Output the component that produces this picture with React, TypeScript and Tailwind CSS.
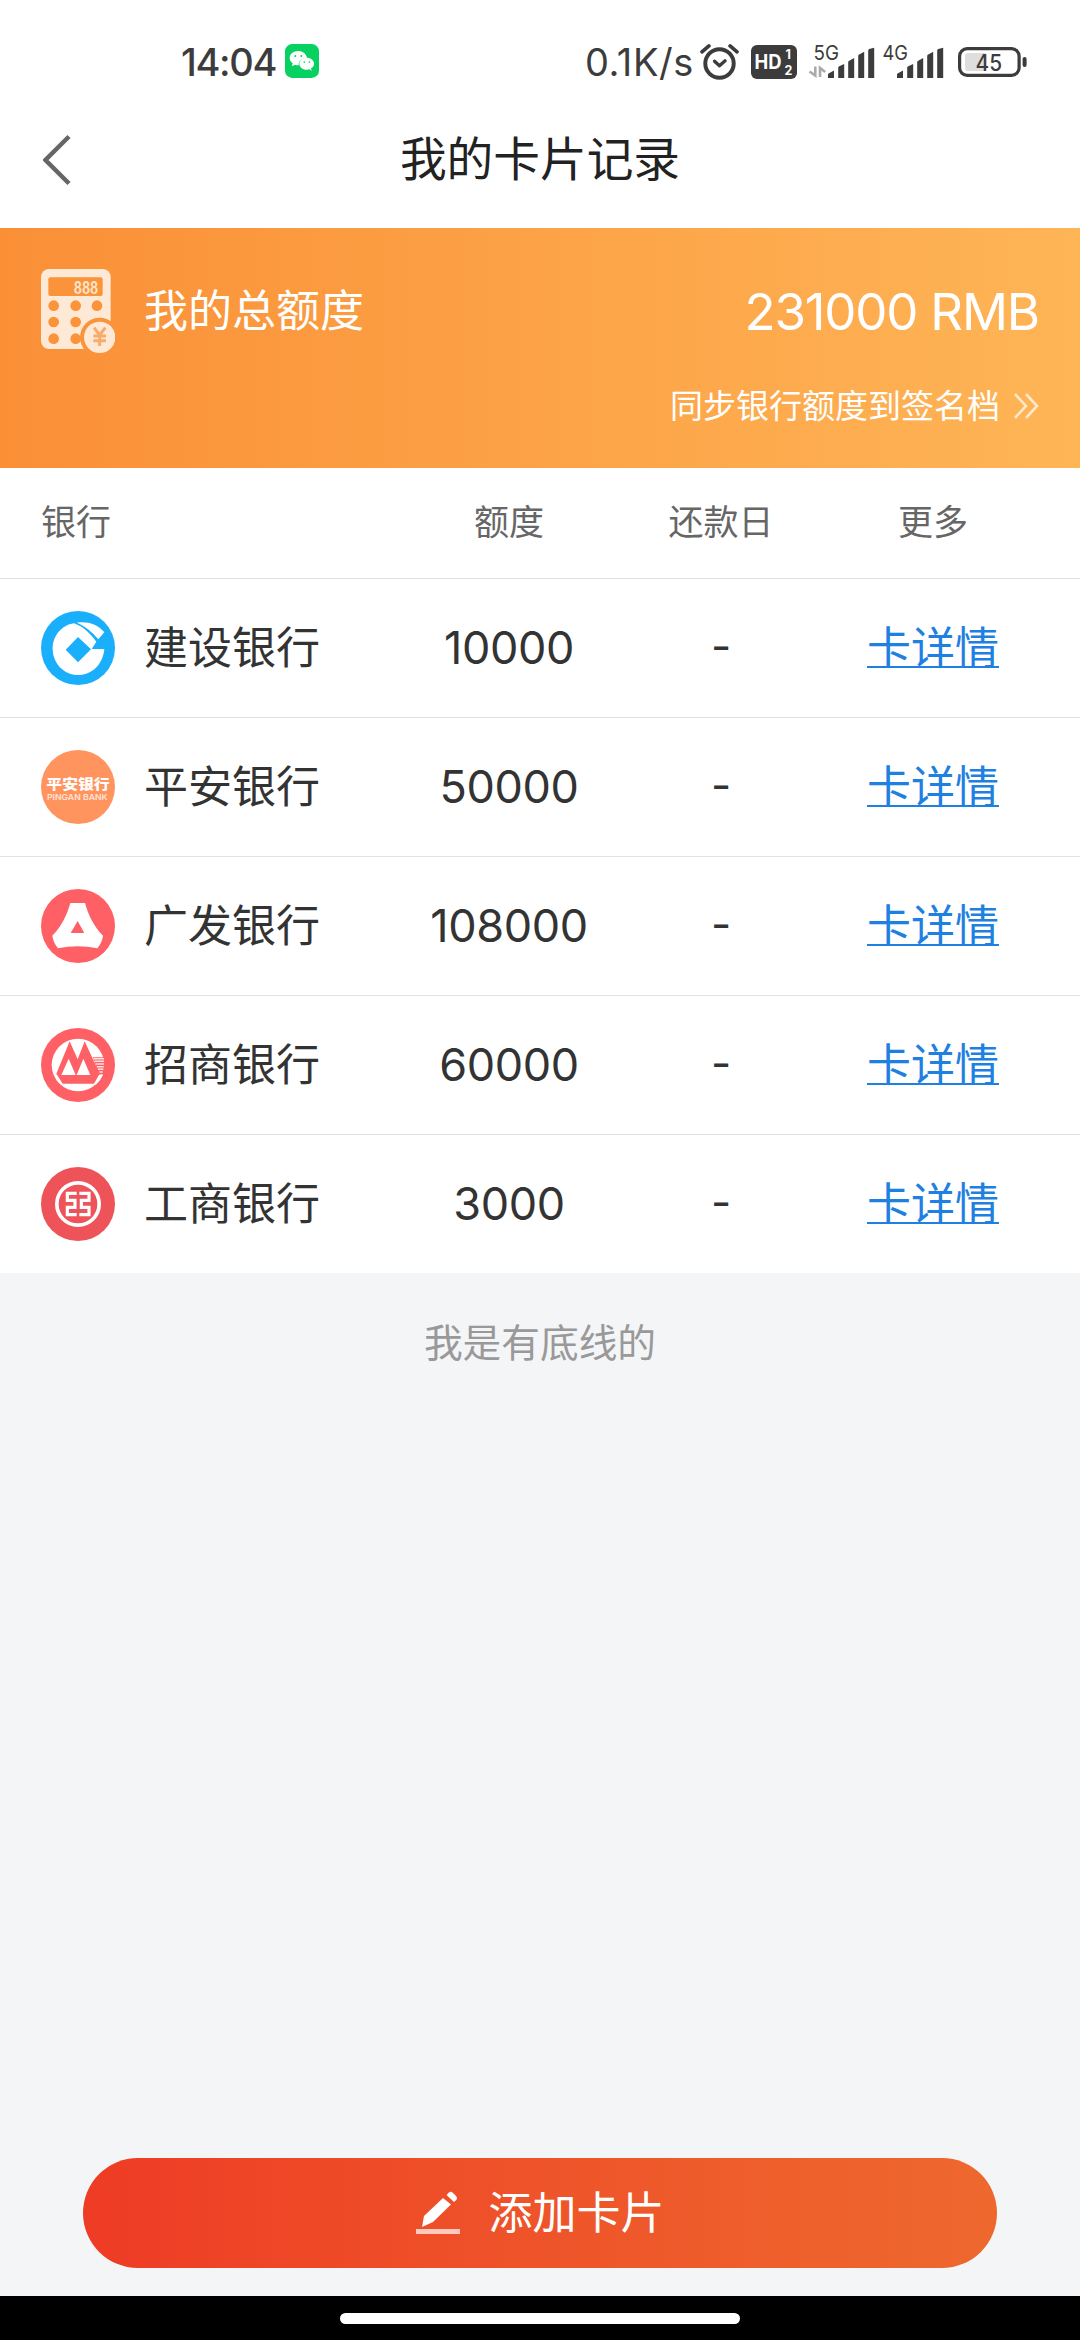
import type { ReactNode } from "react";

const CJK = "font-['Noto_Sans_CJK_SC',sans-serif]";
const LATIN = "font-[Inter,sans-serif]";

const WechatIcon = () => (
  <svg viewBox="0 0 102 102" className="ml-[9px] mt-[1px] size-[34px]">
    <rect width="102" height="102" rx="22" fill="#07d160" />
    <path
      d="M40 21c-15 0-26 9-26 21 0 7 4 12 9 16l-2 9 9-5c3 1 7 2 11 2-1-14 10-22 25-22-2-12-12-21-26-21z"
      fill="#fff"
    />
    <path
      d="M65 41c-13 0-22 8-22 18s9 18 22 18c3 0 5 0 8-1l7 4-2-7c6-3 9-8 9-14 0-10-9-18-22-18z"
      fill="#fff"
    />
    <g fill="#07d160">
      <circle cx="31" cy="36" r="3" />
      <circle cx="49" cy="36" r="3" />
      <circle cx="58" cy="54" r="2.6" />
      <circle cx="73" cy="54" r="2.6" />
    </g>
  </svg>
);

const AlarmIcon = () => (
  <svg viewBox="0 0 118 110" className="h-[37px] w-[39px]" fill="none" stroke="#3c3c3c" strokeLinecap="round">
    <circle cx="59" cy="61" r="43" strokeWidth="12" />
    <path d="M6 26 27 8M112 26 91 8" strokeWidth="11" />
    <path d="m44 54 15 14 17-15" strokeWidth="10" strokeLinejoin="round" />
  </svg>
);

const HdIcon = () => (
  <svg viewBox="0 0 46 34" className="h-[34px] w-[46px] font-[Inter,sans-serif] font-bold" fill="#fff">
    <rect width="46" height="34" rx="6" fill="#3c3c3c" />
    <text x="3.5" y="24" fontSize="20" textLength="27" lengthAdjust="spacingAndGlyphs">HD</text>
    <text x="34.5" y="14" fontSize="12.5">1</text>
    <text x="33.5" y="29.500" fontSize="12.5">2</text>
  </svg>
);

const SignalIcon = ({ label, arrows = false }: { label: string; arrows?: boolean }) => (
  <svg viewBox="0 -6 68 42" className="-mt-[6px] h-[42px] w-[69px] font-[Inter,sans-serif]" fill="#3c3c3c">
    <text x="5" y="17" fontSize="20.5" textLength="25.5" lengthAdjust="spacingAndGlyphs">{label}</text>
    {arrows && (
      <g fill="none" stroke="#aaa" strokeWidth="2.6">
        <path d="M6.8 23.5v9L1 28.5" />
        <path d="M11.5 34v-9l5.2 4" />
      </g>
    )}
    <path d="M19.5 35v-3.4q0-1 1-1.4l5-2.6V35z" />
    <path d="M29.7 35V24.3l1-1 5-2.3v14z" />
    <path d="M39.7 35V18.8l1-1 5-2.8v20z" />
    <path d="M49.7 35v-22.6l1-1 5-2.6V35z" />
    <path d="M59.7 35V7l1-1 5-1.2V35z" />
  </svg>
);

const BatteryIcon = () => (
  <svg viewBox="0 0 70 30" className="ml-[12px] h-[30px] w-[70px] font-[Inter,sans-serif]">
    <rect x="1.6" y="1.6" width="59.5" height="26.8" rx="7.5" fill="none" stroke="#3c3c3c" strokeWidth="3.2" />
    <rect x="7" y="6" width="22" height="18" rx="3" fill="#dedede" />
    <rect x="64.6" y="10" width="4" height="10" rx="2" fill="#3c3c3c" />
    <text x="17.5" y="24" fontSize="22.5" fontWeight="500" fill="#3c3c3c" textLength="26.5" lengthAdjust="spacingAndGlyphs">45</text>
  </svg>
);

const StatusBar = () => (
  <div className={`flex h-[92px] items-start pl-[181px] text-[38px] text-[#3c3c3c] ${LATIN}`}>
    <div className="mt-[43px] flex h-[38px] items-start">
      <span className="w-[95px] whitespace-nowrap font-medium leading-[38px] tracking-[-1.3px]">14:04</span>
      <WechatIcon />
    </div>
    <div className="ml-[266px] mt-[43px] flex h-[38px] items-start">
      <span className="w-[115px] whitespace-nowrap leading-[38px] tracking-[0.6px]">0.1K/s</span>
      <AlarmIcon />
      <div className="ml-[12px] mt-[2px]">
        <HdIcon />
      </div>
      <div className="ml-[11px] flex">
        <SignalIcon label="5G" arrows />
        <SignalIcon label="4G" />
      </div>
      <div className="mt-[4px]">
        <BatteryIcon />
      </div>
    </div>
  </div>
);

const CalculatorIcon = () => (
  <svg viewBox="0 0 222 252" className="h-[84px] w-[74px] shrink-0">
    <rect width="209" height="240" rx="24" fill="#fee9d6" />
    <rect x="22" y="25" width="163" height="56" rx="6" fill="#fa9339" />
    <text x="98" y="74" fontSize="50" fontWeight="700" textLength="74" lengthAdjust="spacingAndGlyphs" fill="#fde2c9" className="font-[Inter,sans-serif]">
      888
    </text>
    <g fill="#fa9339">
      <circle cx="38" cy="110" r="16" />
      <circle cx="104" cy="110" r="16" />
      <circle cx="168" cy="110" r="16" />
      <circle cx="38" cy="159" r="16" />
      <circle cx="104" cy="159" r="16" />
      <circle cx="38" cy="209" r="16" />
      <circle cx="104" cy="209" r="16" />
      <circle cx="176" cy="205" r="59" />
    </g>
    <circle cx="176" cy="205" r="47" fill="#fee9d6" />
    <path d="m159 176 17 22 17-22M176 198v33M157 201h38M157 215h38" fill="none" stroke="#f7ac6b" strokeWidth="9" />
  </svg>
);

const LogoBase = ({ color, children }: { color: string; children: ReactNode }) => (
  <svg viewBox="0 0 222 222" className="size-[74px] shrink-0">
    <circle cx="111" cy="111" r="111" fill={color} />
    {children}
  </svg>
);

const CcbLogo = () => (
  <LogoBase color="#1aaffb">
    <path d="M99 37C62 42 35 75 35 113c0 44 34 79 77 79 41 0 74-32 78-78h-38l14-22C147 67 127 47 99 37z" fill="#fff" />
    <path d="M107 35c32-5 64 4 83 29l-18 21C153 62 132 45 107 35z" fill="#fff" />
    <path d="m111 78-37 38 37 38 39-39z" fill="#1aaffb" />
  </LogoBase>
);

const PinganLogo = () => (
  <LogoBase color="#ff945e">
    <text x="16" y="117" fontSize="42" fontWeight="900" textLength="190" lengthAdjust="spacingAndGlyphs" fill="#fff" className="font-['Noto_Sans_CJK_SC',sans-serif]">
      平安银行
    </text>
    <text x="18" y="150" fontSize="24" fontWeight="600" textLength="182" lengthAdjust="spacingAndGlyphs" fill="#ffe3d6" className="font-[Inter,sans-serif]">
      PINGAN BANK
    </text>
  </LogoBase>
);

const CgbLogo = () => (
  <LogoBase color="#ff6065">
    <path d="M88 42h44c10 36 27 71 54 98-2 14-8 27-17 38-38-8-80-8-118 0-9-11-15-24-17-38 27-27 44-62 54-98z" fill="#fff" />
    <path d="m110 96 20 36H89z" fill="#ff6065" />
  </LogoBase>
);

const CmbLogo = () => (
  <LogoBase color="#ff6065">
    <circle cx="111" cy="111" r="79" fill="#fff" />
    <path d="m86 40 24 54 21-54 45 97-17 30H65l-19-30z" fill="#ff6065" />
    <path d="m83 92 21 49H61zM127 92l21 49h-41z" fill="#fff" />
    <path d="M155 88h50v52h-30z" fill="#ff6065" />
    <path d="M157 92h32M160 100h29M164 108h25M168 116h20M171 124h16M175 132h10" stroke="#ffe0e0" strokeWidth="4.500" />
    <path d="M183 139c-5 12-12 21-21 29" fill="none" stroke="#fff" strokeWidth="7" />
  </LogoBase>
);

const IcbcLogo = () => (
  <LogoBase color="#ed5358">
    <circle cx="111" cy="111" r="63.5" fill="none" stroke="#fff" strokeWidth="11" />
    <path
      d="M107 79H79v21h23v21H79v22h28M115 79h29v21h-23v21h23v22h-29"
      fill="none"
      stroke="#fff"
      strokeWidth="9.500"
    />
  </LogoBase>
);

const banks = [
  { name: "建设银行", limit: "10000", logo: <CcbLogo /> },
  { name: "平安银行", limit: "50000", logo: <PinganLogo /> },
  { name: "广发银行", limit: "108000", logo: <CgbLogo /> },
  { name: "招商银行", limit: "60000", logo: <CmbLogo /> },
  { name: "工商银行", limit: "3000", logo: <IcbcLogo /> },
];

const App = () => {
  return (
    <div className={`flex h-[2340px] w-[1080px] flex-col overflow-hidden bg-[#f4f5f7] text-[#333] ${CJK}`}>
      <div className="h-[228px] bg-white">
        <StatusBar />
        <div className="grid h-[136px] grid-cols-[200px_1fr_200px] items-center">
          <svg viewBox="0 0 28 52" className="ml-[43px] h-[52px] w-[28px]" fill="none" stroke="#666" strokeWidth="4.500">
            <path d="M26 2.500 2.500 26 26 49.500" />
          </svg>
          <h1 className="mb-[8px] text-center text-[46.700px] leading-[60px] text-[#222]">我的卡片记录</h1>
        </div>
      </div>

      <div className="h-[240px] bg-linear-to-r from-[#fa8f36] to-[#feb556] px-[41px] pt-[41px] text-white">
        <div className="flex h-[84px] items-start">
          <CalculatorIcon />
          <span className="ml-[29px] mt-[9px] text-[44px] leading-[60px]">我的总额度</span>
          <span className={`ml-auto mt-[13px] text-[51px] leading-[60px] tracking-[-1.2px] ${LATIN}`}>231000 RMB</span>
        </div>
        <div className="mt-[29px] flex items-center justify-end">
          <span className="mb-[4px] text-[33px] leading-[44px]">同步银行额度到签名档</span>
          <svg viewBox="0 0 26 26" className="ml-[13px] size-[26px] opacity-70" fill="none" stroke="#fff" strokeWidth="2.600">
            <path d="m2 1 11 12L2 25M13 1l11 12-11 12" />
          </svg>
        </div>
      </div>

      <div className="bg-white">
        <div className="grid h-[110px] grid-cols-[362px_212px_212px_212px] items-center px-[41px] pb-[5px] text-center text-[35px] text-[#666]">
          <span className="text-left">银行</span>
          <span>额度</span>
          <span>还款日</span>
          <span>更多</span>
        </div>
        {banks.map((bank) => (
          <div
            key={bank.name}
            className="grid h-[139px] grid-cols-[362px_212px_212px_212px] items-center border-t border-[#e2e2e2] px-[41px] text-center text-[44px] leading-[60px]"
          >
            <div className="flex items-center gap-[29px]">
              {bank.logo}
              <span className="mb-[6px]">{bank.name}</span>
            </div>
            <span className={`text-[45px] tracking-[-0.4px] ${LATIN}`}>{bank.limit}</span>
            <span className={`mb-[5px] ${LATIN}`}>-</span>
            <a className="mb-[6px] text-[#1e80e0] underline decoration-2 underline-offset-[2px] [text-decoration-skip-ink:none]">
              卡详情
            </a>
          </div>
        ))}
      </div>

      <p className="mt-[37px] text-center text-[38.700px] leading-[60px] text-[#999]">我是有底线的</p>

      <button className="mx-[83px] mb-[28px] mt-auto flex h-[110px] items-center justify-center rounded-full bg-linear-to-r from-[#ee3b25] to-[#ee682e] text-[44px] leading-[60px] text-white">
        <svg viewBox="0 0 44 44" className="mr-[29px] size-[44px]" fill="#fff">
          <rect y="38" width="44" height="5" fill="#ffc9bd" />
          <path d="m6 36 2-11L27 7l8 6.500L17 31z" />
          <path d="m30.500 4 2.500-2.500q2-1.500 4 .5l3 3q2 2 .3 4L38 11z" />
        </svg>
        <span className="mb-[6px]">添加卡片</span>
      </button>

      <div className="flex h-[44px] shrink-0 justify-center bg-black pt-[17px]">
        <div className="h-[11px] w-[400px] rounded-full bg-white" />
      </div>
    </div>
  );
};

export default App;
